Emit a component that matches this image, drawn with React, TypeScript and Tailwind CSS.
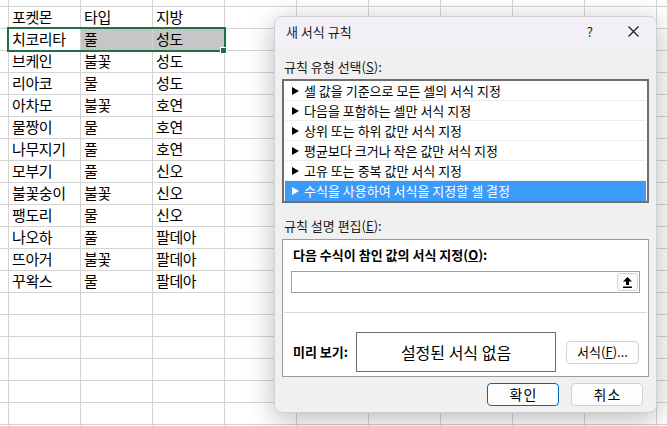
import React from "react";

const FONT = { fontFamily: '"Noto Sans CJK KR", "Noto Sans", sans-serif' };

const sheet: string[][] = [
  ["포켓몬", "타입", "지방"],
  ["치코리타", "풀", "성도"],
  ["브케인", "불꽃", "성도"],
  ["리아코", "물", "성도"],
  ["아차모", "불꽃", "호연"],
  ["물짱이", "물", "호연"],
  ["나무지기", "풀", "호연"],
  ["모부기", "풀", "신오"],
  ["불꽃숭이", "불꽃", "신오"],
  ["팽도리", "물", "신오"],
  ["나오하", "풀", "팔데아"],
  ["뜨아거", "불꽃", "팔데아"],
  ["꾸왁스", "물", "팔데아"],
  [], [], [], [], [], [], [],
];

const rules = [
  "셀 값을 기준으로 모든 셀의 서식 지정",
  "다음을 포함하는 셀만 서식 지정",
  "상위 또는 하위 값만 서식 지정",
  "평균보다 크거나 작은 값만 서식 지정",
  "고유 또는 중복 값만 서식 지정",
  "수식을 사용하여 서식을 지정할 셀 결정",
];

function Arrow({ white }: { white?: boolean }) {
  return (
    <svg width="7" height="8" viewBox="0 0 7 8" className="shrink-0">
      <polygon points="0,0 7,4 0,8" fill={white ? "#ffffff" : "#000000"} />
    </svg>
  );
}

function Sheet() {
  const cols = [0, 1, 2, 3, 4, 5, 6, 7, 8];
  return (
    <div className="flex flex-col">
      <div className="flex h-[7px] border-b border-[#d4d4d4]">
        <div className="w-[9px] shrink-0 border-r border-[#d4d4d4]" />
        {cols.map((c) => (
          <div key={c} className="w-[72px] shrink-0 border-r border-[#d4d4d4]" />
        ))}
      </div>
      {sheet.map((row, r) => (
        <div key={r} className="flex h-[22px] border-b border-[#d4d4d4]">
          <div className="w-[9px] shrink-0 border-r border-[#d4d4d4]" />
          {cols.map((c) => (
            <div
              key={c}
              className={`flex w-[72px] shrink-0 items-center border-r border-[#d4d4d4] pl-[3px] text-[15px] tracking-[-0.4px] text-black ${
                r === 1 && (c === 1 || c === 2) ? "bg-[#c6c6c6]" : ""
              }`}
            >
              {row[c] ?? ""}
            </div>
          ))}
        </div>
      ))}
    </div>
  );
}

function Dialog() {
  return (
    <div className="absolute left-[274px] top-[16px] flex h-[397px] w-[383px] flex-col overflow-hidden rounded-[8px] border border-[#cfcfcf] bg-[#f0f0f0] shadow-[0_6px_28px_rgba(0,0,0,0.28)]">
      <div className="flex h-[29px] shrink-0 items-center bg-[#f3f0f7] pl-[11px] text-[13px] text-[#1a1a1a]">
        <span>새 서식 규칙</span>
        <span className="ml-auto mr-[35px] text-[13px]">?</span>
        <svg width="11" height="11" viewBox="0 0 11 11" className="mr-[17px]">
          <path d="M0.5 0.5 L10.5 10.5 M10.5 0.5 L0.5 10.5" stroke="#1a1a1a" strokeWidth="1.1" />
        </svg>
      </div>

      <div className="flex flex-col px-[7px] pt-[13px] text-[13px] text-[#1a1a1a]">
        <div className="h-[16px] pl-[2px] leading-[16px]">
          규칙 유형 선택(<span className="underline">S</span>):
        </div>

        <div className="mt-[4px] flex flex-col border-2 border-[#6e6e6e] bg-white px-[1px]">
          {rules.map((t, i) => {
            const sel = i === rules.length - 1;
            return (
              <div
                key={t}
                className={`flex h-[20px] items-center gap-[5px] pl-[7px] ${
                  sel ? "bg-[#3c9af8] text-white" : "border-b border-[#ececec] text-black"
                }`}
              >
                <Arrow white={sel} />
                <span>{t}</span>
              </div>
            );
          })}
        </div>

        <div className="mt-[15px] h-[16px] pl-[2px] leading-[16px]">
          규칙 설명 편집(<span className="underline">E</span>):
        </div>

        <div className="mt-[5px] flex h-[138px] flex-col border border-[#9a9a9a] bg-white px-[8px]">
          <div className="mt-[7px] h-[16px] pl-[2px] font-bold leading-[16px] text-black">
            다음 수식이 참인 값의 서식 지정(<span className="underline">O</span>):
          </div>
          <div className="mt-[8px] flex h-[22px] items-center justify-end border border-[#a0a0a0] bg-white pr-[1px]">
            <div className="flex h-[18px] w-[21px] items-center justify-center rounded-[3px] border border-[#d3d3d3] bg-[#fbfbfb]">
              <svg width="9" height="11" viewBox="0 0 9 11">
                <path d="M4.5 0 L9 4.5 L6 4.5 L6 8 L3 8 L3 4.5 L0 4.5 Z" fill="#000" />
                <rect x="0" y="9.5" width="9" height="1.5" fill="#000" />
              </svg>
            </div>
          </div>
          <div className="-mx-[7px] mt-[19px] h-px bg-[#d9d9d9]" />
          <div className="mt-[19px] flex items-center">
            <span className="w-[65px] pl-[2px] font-bold text-black">미리 보기:</span>
            <div className="flex h-[40px] w-[200px] items-center justify-center border border-[#6d6d6d] bg-white text-[16px] text-black">
              설정된 서식 없음
            </div>
            <div className="ml-[10px] flex h-[23px] w-[73px] items-center justify-center rounded-[4px] border border-[#d0d0d0] bg-[#fdfdfd] text-black">
              서식(<span className="underline">F</span>)...
            </div>
          </div>
        </div>

        <div className="mt-[6px] flex justify-end gap-[12px] pr-[6px] text-[14px] text-black">
          <div className="flex h-[23px] w-[72px] items-center justify-center rounded-[4px] border border-[#0067c0] bg-[#fdfdfd] pl-[1px] tracking-[1px]">
            확인
          </div>
          <div className="flex h-[23px] w-[72px] items-center justify-center rounded-[4px] border border-[#d0d0d0] bg-[#fdfdfd] pl-[1px] tracking-[1px]">
            취소
          </div>
        </div>
      </div>
    </div>
  );
}

export default function App() {
  return (
    <div className="relative h-[426px] w-[667px] overflow-hidden bg-white" style={FONT}>
      <Sheet />
      {/* cell selection */}
      <div className="absolute left-[7px] top-[27px] h-[25px] w-[219px] border-2 border-[#1e7145]" />
      <div className="absolute left-[220px] top-[47px] h-[7px] w-[7px] border border-white bg-[#1e7145]" />
      <Dialog />
    </div>
  );
}
